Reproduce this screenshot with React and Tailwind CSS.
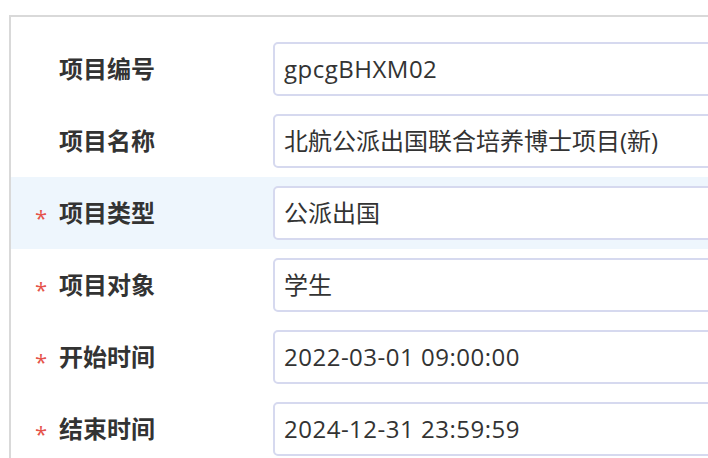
const rows = [
  { label: '项目编号', value: 'gpcgBHXM02', required: false, latin: true },
  { label: '项目名称', value: '北航公派出国联合培养博士项目(新)', required: false },
  { label: '项目类型', value: '公派出国', required: true, active: true },
  { label: '项目对象', value: '学生', required: true },
  { label: '开始时间', value: '2022-03-01 09:00:00', required: true, latin: true },
  { label: '结束时间', value: '2024-12-31 23:59:59', required: true, latin: true },
];

const FormRow = ({ row }) => (
  <div className={`flex items-center h-[72px] ${row.active ? 'bg-[#eef6fd]' : 'bg-white'}`}>
    <div className="w-[262px] shrink-0 flex items-center pl-[24px]">
      <span className="w-[24px] text-[#e5534b] text-[22px] leading-none pt-[8px]">{row.required ? '*' : ''}</span>
      <span className="text-[24px] font-bold text-[#333333]">{row.label}</span>
    </div>
    <div className="flex-1 h-[54px] border-2 border-[#d6d9ef] rounded-[5px] bg-white flex items-center pl-[9px] mr-[-20px]">
      <span className={`text-[24px] text-[#333333] ${row.latin ? 'tracking-[0.5px]' : ''}`}>{row.value}</span>
    </div>
  </div>
);

const App = () => {
  return (
    <div className="w-[708px] h-[458px] bg-white overflow-hidden pt-[15px] pl-[9px]" style={{ fontFamily: '"Open Sans", "Noto Sans CJK SC", sans-serif' }}>
      <div className="border-t-2 border-l-2 border-[#d9d9d9] h-full pt-[16px] overflow-hidden">
        {rows.map(row => (
          <FormRow key={row.label} row={row} />
        ))}
      </div>
    </div>
  );
};

export default App;
